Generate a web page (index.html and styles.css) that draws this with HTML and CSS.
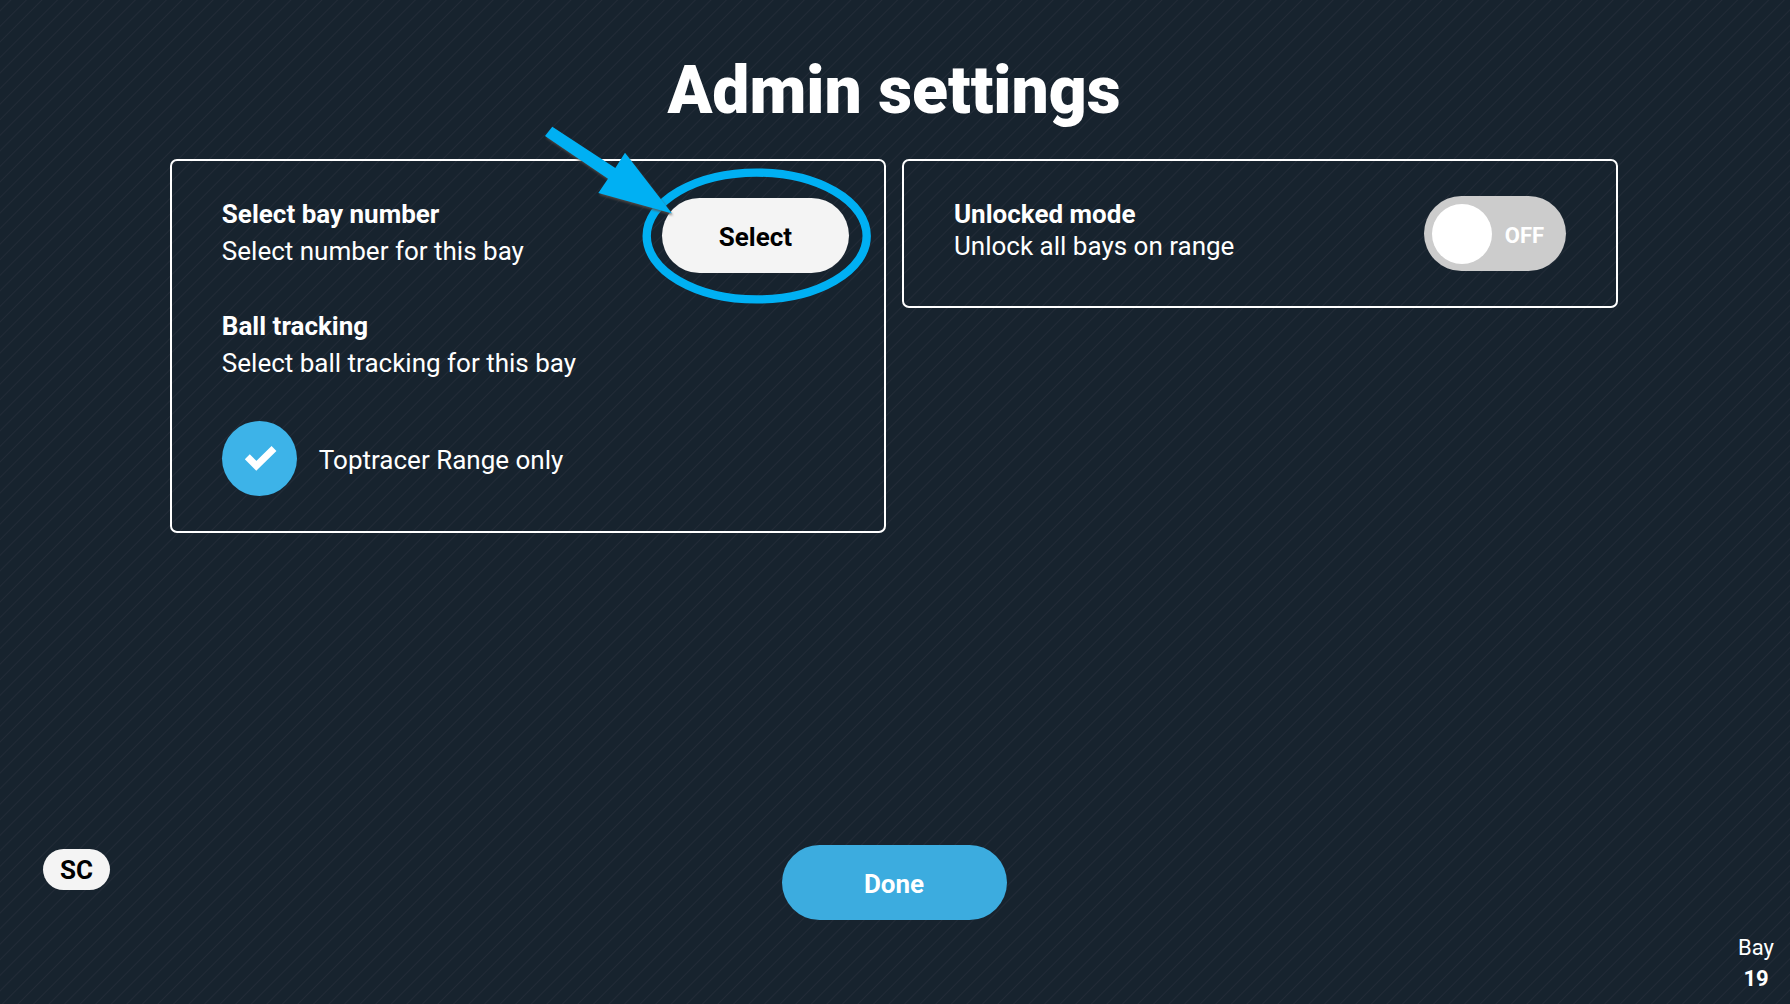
FILE: index.html
```html
<!DOCTYPE html>
<html lang="en">
<head>
    <meta charset="UTF-8">
    <meta name="viewport" content="width=device-width, initial-scale=1.0">
    <title>Admin settings</title>
    <link rel="stylesheet" href="styles.css">
</head>
<body>
    <h1>Admin settings</h1>

    <main class="cards">
        <section class="card card-bay">
            <div class="row">
                <div class="text">
                    <h2>Select bay number</h2>
                    <p>Select number for this bay</p>
                </div>
                <div class="select-wrap">
                    <button type="button" class="btn btn-light">Select</button>
                    <!-- Hint arrow and ring around the button -->
                    <svg class="hint" width="350" height="200" viewBox="0 0 350 200" aria-hidden="true">
                        <ellipse cx="226.7" cy="126" rx="110" ry="63.4" fill="none" stroke="#00b0f3" stroke-width="8.4"/>
                        <path class="arrow" d="M22.3 16.7 L85.3 58 L95 42.7 L142 103.5 L68.3 83 L78 68.7 L15 26 Z" fill="#00b0f3"/>
                    </svg>
                </div>
            </div>
            <div class="text tracking">
                <h2>Ball tracking</h2>
                <p>Select ball tracking for this bay</p>
            </div>
            <label class="option">
                <span class="check">
                    <input type="checkbox" checked>
                    <svg viewBox="0 0 75 75" aria-hidden="true">
                        <path d="M25.3 35.8 L34.3 44.8 L52 27.5" fill="none" stroke="#fff" stroke-width="7"/>
                    </svg>
                </span>
                <span class="option-text">Toptracer Range only</span>
            </label>
        </section>

        <section class="card">
            <div class="row">
                <div class="text compact">
                    <h2 id="unlocked">Unlocked mode</h2>
                    <p>Unlock all bays on range</p>
                </div>
                <label class="toggle">
                    <input type="checkbox" role="switch" aria-labelledby="unlocked">
                    <span>OFF</span>
                </label>
            </div>
        </section>
    </main>

    <footer>
        <button type="button" class="btn-small">SC</button>
        <button type="button" class="btn btn-done">Done</button>
        <div class="bay">
            <span>Bay</span>
            <strong>19</strong>
        </div>
    </footer>
</body>
</html>
```
FILE: styles.css
```css
* {
    box-sizing: border-box;
}
body {
    margin: 0;
    padding-right: 2px;
    min-height: 100vh;
    display: flex;
    flex-direction: column;
    font-family: Roboto, "Liberation Sans", sans-serif;
    font-size: 26px;
    line-height: 37px;
    color: #fff;
    background: repeating-linear-gradient(-45deg, #17232e 0, #17232e 9px, #222b37 10px, #17232e 11px);
}
h1 {
    margin: 0;
    padding: 51px 0 28px;
    font-size: 66px;
    line-height: 80px;
    font-weight: 900;
    text-align: center;
}
h2 {
    margin: 0;
    font-size: 26px;
    font-weight: 700;
}
p {
    margin: 0;
}
button {
    font: inherit;
    font-weight: 700;
    border: none;
    cursor: pointer;
}
.cards {
    width: 81%;
    margin: 0 auto;
    display: grid;
    grid-template-columns: 1fr 1fr;
    align-items: start;
    gap: 16px;
}
.card {
    border: 2px solid #fff;
    border-radius: 7px;
    padding: 35px 50px;
}
.card-bay {
    padding-right: 35px;
}
.row {
    display: flex;
    justify-content: space-between;
    align-items: flex-start;
}
.compact p {
    line-height: 26px;
}
.btn {
    height: 75px;
    padding: 4px 0 0;
    border-radius: 38px;
}
.btn-light {
    width: 187px;
    background: #f4f4f4;
    color: #000;
}
.select-wrap {
    position: relative;
    height: 75px;
    margin-top: 2px;
}
.hint {
    position: absolute;
    left: -132px;
    top: -88px;
    pointer-events: none;
}
.arrow {
    filter: drop-shadow(1px 2px 1px rgba(90, 80, 75, 0.8));
}
.tracking {
    margin: 35px 0 39px;
}
.option {
    display: flex;
    align-items: center;
    gap: 22px;
}
.option-text {
    padding-top: 4px;
}
.check {
    position: relative;
    width: 75px;
    height: 75px;
}
.check input {
    appearance: none;
    display: block;
    width: 100%;
    height: 100%;
    margin: 0;
    border-radius: 50%;
    background: #3db3e8;
}
.check svg {
    position: absolute;
    inset: 0;
    pointer-events: none;
}
.toggle {
    width: 142px;
    height: 75px;
    padding: 0 22px 0 8px;
    border-radius: 38px;
    background: #ccc;
    display: flex;
    align-items: center;
    justify-content: space-between;
    font-size: 22px;
    font-weight: 700;
}
.toggle input {
    appearance: none;
    width: 60px;
    height: 60px;
    margin: 0;
    border-radius: 50%;
    background: #fff;
}
.toggle span {
    padding-top: 4px;
}
footer {
    flex: 1;
    margin-top: 312px;
    padding: 0 14px;
    display: grid;
    grid-template-columns: 1fr auto 1fr;
    align-items: start;
}
.btn-small {
    width: 67px;
    height: 41px;
    margin: 4px 0 0 29px;
    padding: 2px 0 0;
    border-radius: 21px;
    background: #f4f4f4;
    color: #000;
}
.btn-done {
    width: 225px;
    background: #3cacdf;
    color: #fff;
}
.bay {
    align-self: end;
    justify-self: end;
    display: flex;
    flex-direction: column;
    align-items: center;
    padding-bottom: 10px;
    font-size: 22px;
    line-height: 31px;
}
```
